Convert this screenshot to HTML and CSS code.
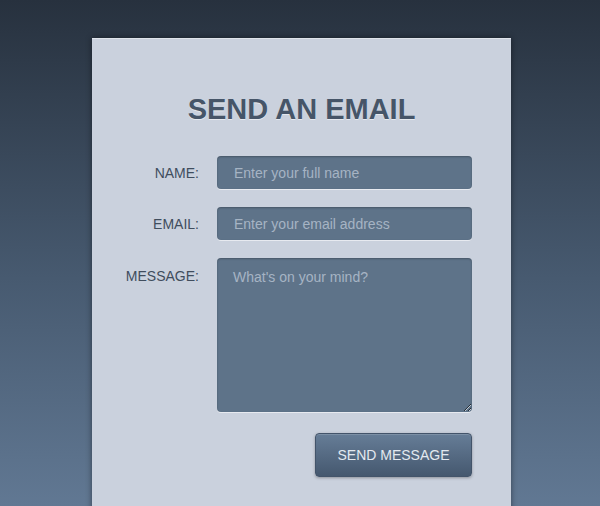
FILE: index.html
```html
<!DOCTYPE html>
<html lang="en">
<head>
    <meta charset="UTF-8">
    <meta name="viewport" content="width=device-width, initial-scale=1.0">
    <title>Send an Email</title>
    <link rel="stylesheet" href="styles.css">
</head>
<body>
    <div class="contact-card">
        <h1 class="contact-title">SEND AN EMAIL</h1>
        <form class="contact-form" onsubmit="return false;">
            <label class="form-label" for="name">NAME:</label>
            <input class="form-field" type="text" id="name" placeholder="Enter your full name">

            <label class="form-label" for="email">EMAIL:</label>
            <input class="form-field" type="email" id="email" placeholder="Enter your email address">

            <label class="form-label form-label-top" for="message">MESSAGE:</label>
            <textarea class="form-field form-message" id="message" placeholder="What's on your mind?"></textarea>

            <div class="form-actions">
                <button class="send-button" type="submit">SEND MESSAGE</button>
            </div>
        </form>
    </div>
</body>
</html>
```

FILE: styles.css
```css
html {
    height: 100%;
}

body {
    margin: 0;
    min-height: 100%;
    font-family: "Liberation Sans", Arial, sans-serif;
    background: linear-gradient(to bottom, #27313e 0%, #475a70 55%, #617893 100%);
    overflow: hidden;
}

.contact-card {
    width: 380px;
    min-height: 480px;
    margin: 38px 0 0 92px;
    padding: 0 39px 0 0;
    background-color: #cad1dd;
    border-top: 1px solid #dfe4eb;
    box-shadow: 0 0 6px rgba(0, 0, 0, 0.45);
}

.contact-title {
    margin: 0;
    padding: 55px 0 0 39px;
    text-align: center;
    font-size: 29px;
    line-height: 30px;
    font-weight: bold;
    color: #465568;
    text-shadow: 0 1px 0 rgba(255, 255, 255, 0.5);
}

.contact-form {
    display: grid;
    grid-template-columns: 107px 255px;
    column-gap: 18px;
    row-gap: 18px;
    margin-top: 32px;
}

.form-label {
    align-self: center;
    text-align: right;
    font-size: 14px;
    color: #404d5d;
}

.form-label-top {
    align-self: start;
    padding-top: 10px;
}

.form-field {
    box-sizing: border-box;
    width: 255px;
    height: 33px;
    padding: 0 17px;
    border: none;
    border-radius: 4px;
    background-color: #5e7389;
    color: #e4e9ef;
    font-family: "Liberation Sans", Arial, sans-serif;
    font-size: 14px;
    box-shadow: inset 0 1px 2px rgba(0, 0, 0, 0.25), 0 1px 0 rgba(255, 255, 255, 0.55);
    outline: none;
}

.form-field::placeholder {
    color: #a6b4c4;
}

.form-message {
    height: 154px;
    padding: 11px 16px;
    resize: vertical;
    display: block;
}

.form-actions {
    grid-column: 2;
    display: flex;
    justify-content: flex-end;
    margin-top: 3px;
}

.send-button {
    width: 157px;
    height: 44px;
    border: 1px solid #43546a;
    border-radius: 4px;
    background: linear-gradient(to bottom, #667d97, #45586f);
    color: #e3e9f0;
    font-family: "Liberation Sans", Arial, sans-serif;
    font-size: 14px;
    box-shadow: 0 1px 3px rgba(0, 0, 0, 0.3), inset 0 1px 0 rgba(255, 255, 255, 0.15);
    cursor: pointer;
}
```
